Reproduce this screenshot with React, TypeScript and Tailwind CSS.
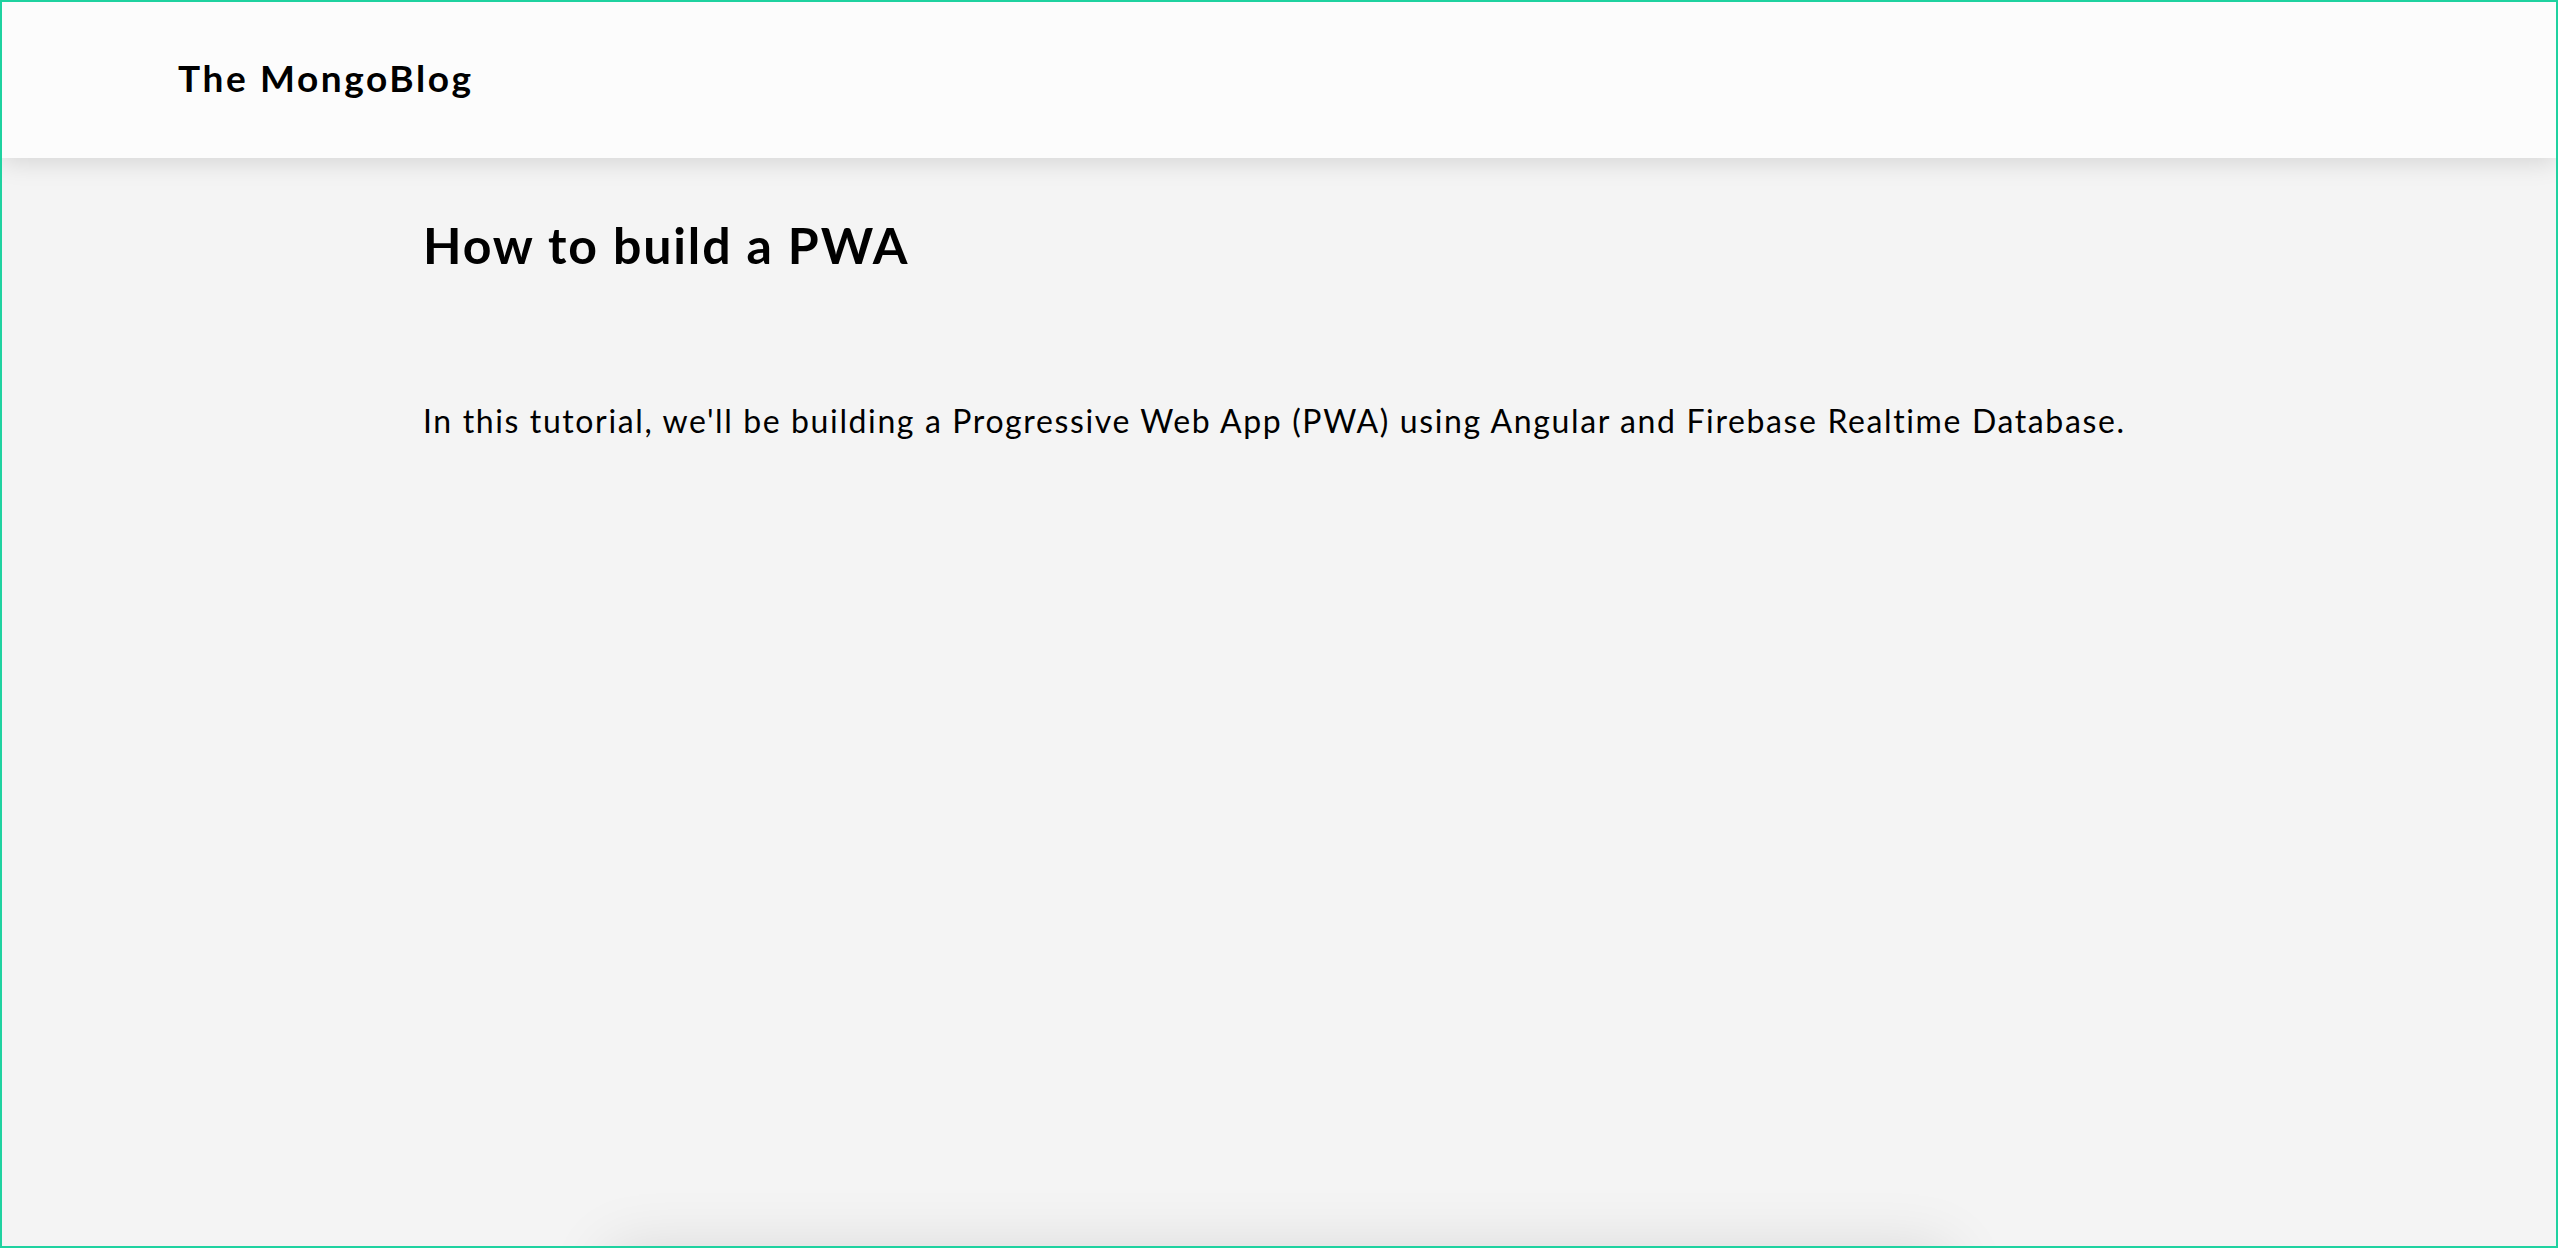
export default function App() {
  return (
    <div className="relative h-[1248px] w-full overflow-hidden border-2 border-[#1fd2a0] bg-[#f4f4f4] font-['Lato',_sans-serif] text-black">
      <header className="relative z-10 flex h-[156px] items-center bg-[#fcfcfc] pb-[5px] pl-[176px] shadow-[0_4px_24px_rgba(0,0,0,0.13)]">
        <h1 className="text-[37px] font-bold leading-[44px] tracking-[2.6px]">The MongoBlog</h1>
      </header>
      <main className="flex flex-col pt-[57px]">
        <div className="pl-[421px]">
          <h2 className="text-[50px] font-bold leading-[60px] tracking-[1.9px]">How to build a PWA</h2>
          <p className="mt-[127px] text-[32px] leading-[38px] tracking-[1.62px]">
            In this tutorial, we'll be building a Progressive Web App (PWA) using Angular and Firebase Realtime Database.
          </p>
        </div>
        <section className="mx-auto mt-[810px] h-[600px] w-[1340px] bg-[#f4f4f4] shadow-[0_0_60px_rgba(0,0,0,0.12)]" />
      </main>
    </div>
  );
}
